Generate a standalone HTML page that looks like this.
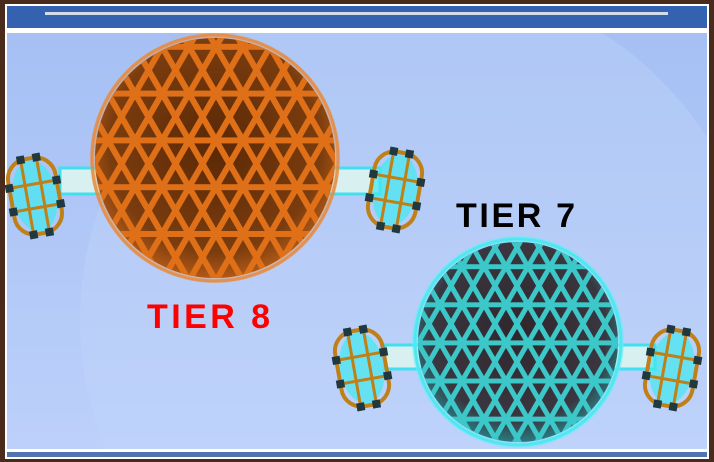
<!DOCTYPE html>
<html><head><style>
html,body{margin:0;padding:0;width:714px;height:462px;overflow:hidden;background:#4a2a1a}
svg{display:block;overflow:hidden}
.t{font-family:"Liberation Sans",sans-serif;font-weight:900;letter-spacing:3px}
</style></head><body>
<svg width="714" height="462" viewBox="0 0 714 462" xmlns="http://www.w3.org/2000/svg">
<defs>
<linearGradient id="sky" x1="0" y1="0" x2="0" y2="1"><stop offset="0" stop-color="#a6c0f4"/><stop offset="1" stop-color="#bcd0fa"/></linearGradient>
<radialGradient id="og" cx="0.5" cy="0.45" r="0.55"><stop offset="0" stop-color="#5a2806"/><stop offset="0.8" stop-color="#7a3c0e"/><stop offset="1" stop-color="#b05816"/></radialGradient>
<radialGradient id="tg" cx="0.5" cy="0.45" r="0.55"><stop offset="0" stop-color="#30262c"/><stop offset="0.8" stop-color="#3a3640"/><stop offset="1" stop-color="#2a7a80"/></radialGradient>
<pattern id="tri" width="54" height="46.8" patternUnits="userSpaceOnUse">
<path d="M0 0H54M0 46.8H54M0 0L27 46.8L54 0M0 46.8L27 0L54 46.8" stroke="#e07018" stroke-width="6" fill="none"/>
</pattern>
<pattern id="tri2" width="44" height="38.1" patternUnits="userSpaceOnUse">
<path d="M0 0H44M0 38.1H44M0 0L22 38.1L44 0M0 38.1L22 0L44 38.1" stroke="#3cc8c8" stroke-width="5" fill="none"/>
</pattern>
<clipPath id="c1"><circle cx="215" cy="158" r="120"/></clipPath>
<clipPath id="c2"><circle cx="518" cy="342" r="100"/></clipPath>
<clipPath id="skyc"><rect x="7" y="33" width="700" height="416"/></clipPath>
<g id="ring">
<ellipse cx="0" cy="0" rx="22" ry="36" fill="#40e8f0" opacity="0.7"/>
<rect x="-24" y="-38" width="48" height="76" rx="20" fill="none" stroke="#c08018" stroke-width="4"/>
<path d="M-24 -12H24M-24 12H24M-8 -38V38M8 -38V38" stroke="#c08018" stroke-width="3"/>
<g fill="#203840"><rect x="-28" y="-16" width="8" height="8"/><rect x="-28" y="8" width="8" height="8"/><rect x="20" y="-16" width="8" height="8"/><rect x="20" y="8" width="8" height="8"/><rect x="-12" y="-42" width="8" height="8"/><rect x="4" y="-42" width="8" height="8"/><rect x="-12" y="34" width="8" height="8"/><rect x="4" y="34" width="8" height="8"/></g>
</g>
</defs>
<rect x="5" y="4" width="704" height="455" fill="#fff"/>
<rect x="7" y="6" width="700" height="22" fill="#3462b0"/>
<rect x="45" y="12" width="623" height="3" fill="#d4dcea"/>
<rect x="7" y="33" width="700" height="416" fill="url(#sky)"/>
<rect x="7" y="452" width="700" height="5" fill="#5272b0"/>
<g clip-path="url(#skyc)"><circle cx="420" cy="320" r="340" fill="#c4d6fa" opacity="0.35"/></g>
<rect x="60" y="168" width="60" height="26" fill="#d8f0f0" stroke="#40e0f0" stroke-width="3"/>
<rect x="320" y="168" width="60" height="26" fill="#d8f0f0" stroke="#40e0f0" stroke-width="3"/>
<rect x="385" y="345" width="50" height="24" fill="#d8f0f0" stroke="#40e0f0" stroke-width="3"/>
<rect x="600" y="345" width="55" height="24" fill="#d8f0f0" stroke="#40e0f0" stroke-width="3"/>
<circle cx="215" cy="158" r="125" fill="#e89040" opacity="0.4"/>
<circle cx="215" cy="158" r="120" fill="url(#og)"/>
<rect x="90" y="33" width="260" height="260" fill="url(#tri)" clip-path="url(#c1)"/>
<circle cx="215" cy="158" r="123" fill="none" stroke="#e88838" stroke-width="3" opacity="0.8"/>
<circle cx="518" cy="342" r="106" fill="#60f0f8" opacity="0.5"/>
<circle cx="518" cy="342" r="100" fill="url(#tg)"/>
<rect x="410" y="235" width="220" height="215" fill="url(#tri2)" clip-path="url(#c2)"/>
<circle cx="518" cy="342" r="103" fill="none" stroke="#50e8f0" stroke-width="3"/>
<use href="#ring" x="35" y="196" transform="rotate(-10 35 196)"/>
<use href="#ring" x="395" y="190" transform="rotate(10 395 190)"/>
<use href="#ring" x="362" y="368" transform="rotate(-10 362 368)"/>
<use href="#ring" x="672" y="368" transform="rotate(10 672 368)"/>
<text x="147" y="328" class="t" font-size="34" fill="#ff0000" textLength="126">TIER 8</text>
<text x="456" y="227" class="t" font-size="34" fill="#000" textLength="122">TIER 7</text>
</svg>
</body></html>
